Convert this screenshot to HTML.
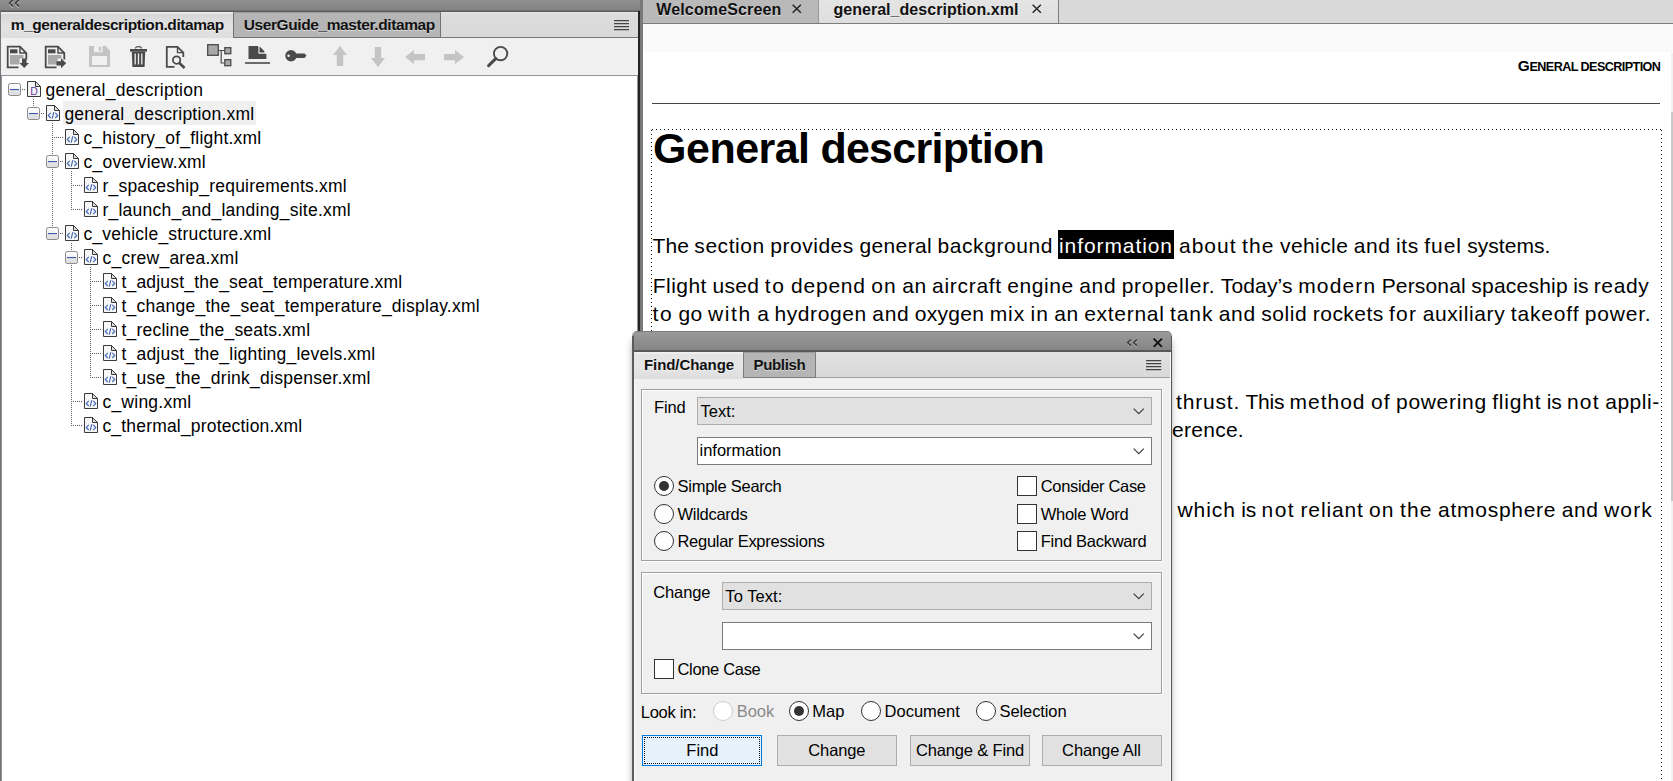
<!DOCTYPE html><html><head><meta charset="utf-8"><title>general_description.xml</title><style>
html,body{margin:0;padding:0}
body{width:1673px;height:781px;overflow:hidden;position:relative;background:#fff;font-family:"Liberation Sans",sans-serif;color:#000}
.a{position:absolute}
.t{position:absolute;white-space:pre;line-height:1;font-family:"Liberation Sans",sans-serif}
svg{position:absolute;overflow:visible}
.gb{position:absolute;border:1px solid #a0a0a0;box-shadow:inset 1px 1px 0 #fff,1px 1px 0 #fff}
.dd{position:absolute;background:#e1e1e1;border:1px solid #adadad;box-sizing:border-box}
.in{position:absolute;background:#fff;border:1px solid #7a7a7a;box-sizing:border-box}
.cb{position:absolute;width:20px;height:20px;background:#fff;border:1px solid #333;box-sizing:border-box}
.rb{position:absolute;width:20px;height:20px;background:#fff;border:1px solid #333;border-radius:50%;box-sizing:border-box}
.rb.on::after{content:"";position:absolute;left:4px;top:4px;width:10px;height:10px;border-radius:50%;background:#333}
.rb.dis{border-color:#ccc}
.btn{position:absolute;background:#e1e1e1;border:1px solid #adadad;box-sizing:border-box}
</style></head><body>
<svg width="0" height="0" style="position:absolute"><defs>
<linearGradient id="gx" x1="0" y1="0" x2="0" y2="1"><stop offset="0" stop-color="#ffffff"/><stop offset="0.5" stop-color="#f2f2f2"/><stop offset="0.5" stop-color="#e4e4e4"/><stop offset="1" stop-color="#dedede"/></linearGradient>
</defs></svg>
<div class="a" id="left" style="left:0;top:0;width:643px;height:781px;background:#dcdcdc">
<div class="a" style="left:0;top:0;width:640px;height:12px;background:linear-gradient(#909090 0,#828282 10px,#5c5c5c 11px,#5c5c5c 12px)"></div>
<svg style="left:9px;top:-1.5px" width="11" height="10" viewBox="0 0 11 10"><path d="M4 2L0.5 5.4L4 8.8M10 2L6.5 5.4L10 8.8" fill="none" stroke="#b4b4b4" stroke-width="1.1"/><path d="M4 0.6L0.5 4L4 7.4M10 0.6L6.5 4L10 7.4" fill="none" stroke="#303030" stroke-width="1.3"/></svg>
<div class="a" style="left:1px;top:12px;width:637px;height:26px;background:linear-gradient(#e4e4e4 0,#dcdcdc 3px,#d8d8d8 100%);border-bottom:1px solid #7a7a7a;box-sizing:border-box"></div>
<div class="a" style="left:1px;top:12px;width:232px;height:27px;background:linear-gradient(#e9e9e9 0,#e9e9e9 1.5px,#d7d7d7 2.5px,#e2e2e2 50%,#dedede 100%)"></div>
<div class="a" style="left:233px;top:12px;width:208px;height:26px;background:#b5b5b5;border:1px solid #727272;border-top:1px solid #9c9c9c;box-sizing:border-box"></div>
<span class="t" style="left:10.63px;top:17px;font-size:15.5px;font-weight:700;letter-spacing:-0.413px;color:#111;text-shadow:0 1px 0 rgba(255,255,255,.5);">m_generaldescription.ditamap</span>
<span class="t" style="left:243.73px;top:17px;font-size:15.5px;font-weight:700;letter-spacing:-0.400px;color:#111;text-shadow:0 1px 0 rgba(255,255,255,.5);">UserGuide_master.ditamap</span>
<svg style="left:614px;top:20px" width="15" height="11" viewBox="0 0 15 11"><path d="M0 0.6H15M0 3.6H15M0 6.6H15M0 9.6H15" stroke="#444" stroke-width="1.25"/></svg>
<div class="a" style="left:1px;top:38px;width:638px;height:37px;background:#f0f0f0"></div>
<svg style="left:7px;top:46px" width="23" height="23" viewBox="0 0 23 23"><path d="M11.5 21.3H0.7V0.7H13L19.3 7V13.5" fill="none" stroke="#4a4a4a" stroke-width="1.8"/><path d="M13 0.7V7H19.3" fill="none" stroke="#4a4a4a" stroke-width="1.5"/><rect x="3" y="3.3" width="7.5" height="4" fill="#4a4a4a"/><path d="M3 9H16.5V12.5H12.5V18.5H3Z" fill="#a8a8a8"/><path d="M15 12.5H19.5V17H22L17.2 22L12.5 17H15Z" fill="#4a4a4a"/></svg>
<svg style="left:45px;top:46px" width="23" height="23" viewBox="0 0 23 23"><path d="M11.5 21.3H0.7V0.7H13L19.3 7V13.5" fill="none" stroke="#4a4a4a" stroke-width="1.8"/><path d="M13 0.7V7H19.3" fill="none" stroke="#4a4a4a" stroke-width="1.5"/><rect x="3" y="3.3" width="7.5" height="4" fill="#4a4a4a"/><path d="M3 9H16.5V12.5H12.5V18.5H3Z" fill="#a8a8a8"/><path d="M11.5 15.3H16V12.3L21.2 17.3L16 22.3V19.5H11.5Z" fill="#4a4a4a"/></svg>
<svg style="left:89px;top:46px" width="21" height="21" viewBox="0 0 21 21"><path d="M0 0H16.5L21 4.5V21H0Z" fill="#c4c4c4"/><rect x="5" y="0" width="8.5" height="6.2" fill="#f0f0f0"/><rect x="9.8" y="0.8" width="2.3" height="4" fill="#c4c4c4"/><rect x="3" y="10" width="15" height="9" fill="#f0f0f0"/></svg>
<svg style="left:130px;top:46px" width="17" height="21" viewBox="0 0 17 21"><path d="M5.5 2.5Q5.5 0.6 8.5 0.6Q11.5 0.6 11.5 2.5" fill="none" stroke="#4a4a4a" stroke-width="1.2"/><rect x="0" y="3" width="17" height="2.6" fill="#4a4a4a"/><path d="M1.8 5.6H15.2L14.6 21H2.4Z" fill="#4a4a4a"/><path d="M5.2 7.5V18.6M8.5 7.5V18.6M11.8 7.5V18.6" stroke="#f0f0f0" stroke-width="1.3"/></svg>
<svg style="left:166px;top:46px" width="20" height="23" viewBox="0 0 20 23"><path d="M8.5 20.8H0.8V0.8H11.5L17.3 6.6V11" fill="none" stroke="#4a4a4a" stroke-width="1.8"/><path d="M11.5 0.8V6.6H17.3" fill="none" stroke="#4a4a4a" stroke-width="1.4"/><circle cx="10.6" cy="14.1" r="3.7" fill="#f0f0f0" stroke="#4a4a4a" stroke-width="1.8"/><path d="M13.3 17L18.6 22" stroke="#4a4a4a" stroke-width="2.6"/></svg>
<svg style="left:207px;top:44px" width="25" height="23" viewBox="0 0 25 23"><path d="M12 6.5H17.5M14.2 6.5V19H17.5" fill="none" stroke="#4a4a4a" stroke-width="1.2"/><rect x="0.7" y="0.7" width="10.6" height="10.6" fill="#a8a8a8" stroke="#4a4a4a" stroke-width="1.3"/><rect x="17.8" y="3.7" width="6" height="6" fill="#a8a8a8" stroke="#4a4a4a" stroke-width="1.3"/><rect x="17.8" y="15.7" width="6" height="6" fill="#a8a8a8" stroke="#4a4a4a" stroke-width="1.3"/></svg>
<svg style="left:245px;top:46px" width="25" height="18" viewBox="0 0 25 18"><path d="M3.5 0H13L21.4 8.4V13H3.5Z" fill="#4a4a4a"/><path d="M14.2 0.2V5.3H19.3Z" fill="#4a4a4a"/><path d="M14 0V7.2H21.4" fill="none" stroke="#f0f0f0" stroke-width="1.2"/><path d="M14.8 0.9L14.8 5.9H19.8Z" fill="#4a4a4a"/><rect x="0" y="16.2" width="25" height="1.6" fill="#4a4a4a"/></svg>
<svg style="left:284.5px;top:50px" width="22" height="12" viewBox="0 0 22 12"><circle cx="6" cy="5.8" r="5.7" fill="#4a4a4a"/><path d="M10 3.4H19.5L21.5 5.6L19.5 8H10Z" fill="#4a4a4a"/><circle cx="3.6" cy="5.8" r="1.3" fill="#f0f0f0"/></svg>
<svg style="left:332.5px;top:45.8px" width="14" height="20" viewBox="0 0 14 20"><path d="M7 0L14 9H10.2V20H3.8V9H0Z" fill="#c4c4c4"/></svg>
<svg style="left:370.6px;top:47.2px" width="14" height="20" viewBox="0 0 14 20"><path d="M3.8 0H10.2V11H14L7 20L0 11H3.8Z" fill="#c4c4c4"/></svg>
<svg style="left:404.8px;top:50px" width="20" height="14" viewBox="0 0 20 14"><path d="M0 7L9 0V4H20V10.2H9V14Z" fill="#c4c4c4"/></svg>
<svg style="left:444.2px;top:50px" width="20" height="14" viewBox="0 0 20 14"><path d="M20 7L11 0V4H0V10.2H11V14Z" fill="#c4c4c4"/></svg>
<svg style="left:487px;top:46px" width="22" height="21" viewBox="0 0 22 21"><circle cx="13.6" cy="7.6" r="6.7" fill="none" stroke="#4a4a4a" stroke-width="1.9"/><path d="M8.8 12.6L1.6 19.6" stroke="#4a4a4a" stroke-width="3" stroke-linecap="round"/></svg>
<div class="a" style="left:1px;top:75px;width:637px;height:720px;background:#fff;border:1px solid #8f949c;box-sizing:border-box"></div>
<div class="a" style="left:63px;top:101px;width:193px;height:24px;background:#f0f0f0"></div>
<div class="a" style="left:22px;top:89px;width:4px;height:1px;background:repeating-linear-gradient(to right,#5c5c5c 0 1px,transparent 1px 2px)"></div>
<div class="a" style="left:33px;top:99px;width:1px;height:15px;background:repeating-linear-gradient(to bottom,#5c5c5c 0 1px,transparent 1px 2px)"></div>
<div class="a" style="left:41px;top:113px;width:4px;height:1px;background:repeating-linear-gradient(to right,#5c5c5c 0 1px,transparent 1px 2px)"></div>
<div class="a" style="left:52px;top:123px;width:1px;height:111px;background:repeating-linear-gradient(to bottom,#5c5c5c 0 1px,transparent 1px 2px)"></div>
<div class="a" style="left:54px;top:137px;width:10px;height:1px;background:repeating-linear-gradient(to right,#5c5c5c 0 1px,transparent 1px 2px)"></div>
<div class="a" style="left:60px;top:161px;width:4px;height:1px;background:repeating-linear-gradient(to right,#5c5c5c 0 1px,transparent 1px 2px)"></div>
<div class="a" style="left:71px;top:171px;width:1px;height:39px;background:repeating-linear-gradient(to bottom,#5c5c5c 0 1px,transparent 1px 2px)"></div>
<div class="a" style="left:73px;top:185px;width:10px;height:1px;background:repeating-linear-gradient(to right,#5c5c5c 0 1px,transparent 1px 2px)"></div>
<div class="a" style="left:73px;top:209px;width:10px;height:1px;background:repeating-linear-gradient(to right,#5c5c5c 0 1px,transparent 1px 2px)"></div>
<div class="a" style="left:60px;top:233px;width:4px;height:1px;background:repeating-linear-gradient(to right,#5c5c5c 0 1px,transparent 1px 2px)"></div>
<div class="a" style="left:71px;top:243px;width:1px;height:183px;background:repeating-linear-gradient(to bottom,#5c5c5c 0 1px,transparent 1px 2px)"></div>
<div class="a" style="left:79px;top:257px;width:4px;height:1px;background:repeating-linear-gradient(to right,#5c5c5c 0 1px,transparent 1px 2px)"></div>
<div class="a" style="left:90px;top:267px;width:1px;height:111px;background:repeating-linear-gradient(to bottom,#5c5c5c 0 1px,transparent 1px 2px)"></div>
<div class="a" style="left:92px;top:281px;width:10px;height:1px;background:repeating-linear-gradient(to right,#5c5c5c 0 1px,transparent 1px 2px)"></div>
<div class="a" style="left:92px;top:305px;width:10px;height:1px;background:repeating-linear-gradient(to right,#5c5c5c 0 1px,transparent 1px 2px)"></div>
<div class="a" style="left:92px;top:329px;width:10px;height:1px;background:repeating-linear-gradient(to right,#5c5c5c 0 1px,transparent 1px 2px)"></div>
<div class="a" style="left:92px;top:353px;width:10px;height:1px;background:repeating-linear-gradient(to right,#5c5c5c 0 1px,transparent 1px 2px)"></div>
<div class="a" style="left:92px;top:377px;width:10px;height:1px;background:repeating-linear-gradient(to right,#5c5c5c 0 1px,transparent 1px 2px)"></div>
<div class="a" style="left:73px;top:401px;width:10px;height:1px;background:repeating-linear-gradient(to right,#5c5c5c 0 1px,transparent 1px 2px)"></div>
<div class="a" style="left:73px;top:425px;width:10px;height:1px;background:repeating-linear-gradient(to right,#5c5c5c 0 1px,transparent 1px 2px)"></div>
<svg style="left:8px;top:83px" width="13" height="13" viewBox="0 0 13 13"><rect x="0.5" y="0.5" width="12" height="12" rx="1.8" fill="url(#gx)" stroke="#8c8c8c"/><rect x="2" y="6" width="9" height="1.1" fill="#3d5cb0"/></svg>
<svg style="left:27px;top:81px" width="14" height="16" viewBox="0 0 14 16"><path d="M0.5 0.5H8.5L13.5 5.5V15.5H0.5Z" fill="#f6f6f6" stroke="#3a3a3a" stroke-width="1"/><path d="M8.5 0.5V5.5H13.5Z" fill="#dcdcdc" stroke="#3a3a3a" stroke-width="1"/><text x="3.3" y="14" font-family="Liberation Sans,sans-serif" font-size="10.5" fill="#6a3aa8">D</text></svg>
<span class="t" style="left:45.42px;top:82px;font-size:17.5px;letter-spacing:0.264px;">general_description</span>
<svg style="left:27px;top:107px" width="13" height="13" viewBox="0 0 13 13"><rect x="0.5" y="0.5" width="12" height="12" rx="1.8" fill="url(#gx)" stroke="#8c8c8c"/><rect x="2" y="6" width="9" height="1.1" fill="#3d5cb0"/></svg>
<svg style="left:46px;top:105px" width="14" height="16" viewBox="0 0 14 16"><path d="M0.5 0.5H8.5L13.5 5.5V15.5H0.5Z" fill="#f6f6f6" stroke="#3a3a3a" stroke-width="1"/><path d="M8.5 0.5V5.5H13.5Z" fill="#dcdcdc" stroke="#3a3a3a" stroke-width="1"/><path d="M4.7 7.8L2.3 10.4L4.7 13M9.3 7.8L11.7 10.4L9.3 13M7.8 7.2L6.2 13.6" fill="none" stroke="#4468b8" stroke-width="1.15"/></svg>
<span class="t" style="left:64.42px;top:106px;font-size:17.5px;letter-spacing:0.228px;">general_description.xml</span>
<svg style="left:65px;top:129px" width="14" height="16" viewBox="0 0 14 16"><path d="M0.5 0.5H8.5L13.5 5.5V15.5H0.5Z" fill="#f6f6f6" stroke="#3a3a3a" stroke-width="1"/><path d="M8.5 0.5V5.5H13.5Z" fill="#dcdcdc" stroke="#3a3a3a" stroke-width="1"/><path d="M4.7 7.8L2.3 10.4L4.7 13M9.3 7.8L11.7 10.4L9.3 13M7.8 7.2L6.2 13.6" fill="none" stroke="#4468b8" stroke-width="1.15"/></svg>
<span class="t" style="left:83.42px;top:130px;font-size:17.5px;letter-spacing:0.210px;">c_history_of_flight.xml</span>
<svg style="left:46px;top:155px" width="13" height="13" viewBox="0 0 13 13"><rect x="0.5" y="0.5" width="12" height="12" rx="1.8" fill="url(#gx)" stroke="#8c8c8c"/><rect x="2" y="6" width="9" height="1.1" fill="#3d5cb0"/></svg>
<svg style="left:65px;top:153px" width="14" height="16" viewBox="0 0 14 16"><path d="M0.5 0.5H8.5L13.5 5.5V15.5H0.5Z" fill="#f6f6f6" stroke="#3a3a3a" stroke-width="1"/><path d="M8.5 0.5V5.5H13.5Z" fill="#dcdcdc" stroke="#3a3a3a" stroke-width="1"/><path d="M4.7 7.8L2.3 10.4L4.7 13M9.3 7.8L11.7 10.4L9.3 13M7.8 7.2L6.2 13.6" fill="none" stroke="#4468b8" stroke-width="1.15"/></svg>
<span class="t" style="left:83.42px;top:154px;font-size:17.5px;letter-spacing:0.279px;">c_overview.xml</span>
<svg style="left:84px;top:177px" width="14" height="16" viewBox="0 0 14 16"><path d="M0.5 0.5H8.5L13.5 5.5V15.5H0.5Z" fill="#f6f6f6" stroke="#3a3a3a" stroke-width="1"/><path d="M8.5 0.5V5.5H13.5Z" fill="#dcdcdc" stroke="#3a3a3a" stroke-width="1"/><path d="M4.7 7.8L2.3 10.4L4.7 13M9.3 7.8L11.7 10.4L9.3 13M7.8 7.2L6.2 13.6" fill="none" stroke="#4468b8" stroke-width="1.15"/></svg>
<span class="t" style="left:102.42px;top:178px;font-size:17.5px;letter-spacing:0.223px;">r_spaceship_requirements.xml</span>
<svg style="left:84px;top:201px" width="14" height="16" viewBox="0 0 14 16"><path d="M0.5 0.5H8.5L13.5 5.5V15.5H0.5Z" fill="#f6f6f6" stroke="#3a3a3a" stroke-width="1"/><path d="M8.5 0.5V5.5H13.5Z" fill="#dcdcdc" stroke="#3a3a3a" stroke-width="1"/><path d="M4.7 7.8L2.3 10.4L4.7 13M9.3 7.8L11.7 10.4L9.3 13M7.8 7.2L6.2 13.6" fill="none" stroke="#4468b8" stroke-width="1.15"/></svg>
<span class="t" style="left:102.42px;top:202px;font-size:17.5px;letter-spacing:0.251px;">r_launch_and_landing_site.xml</span>
<svg style="left:46px;top:227px" width="13" height="13" viewBox="0 0 13 13"><rect x="0.5" y="0.5" width="12" height="12" rx="1.8" fill="url(#gx)" stroke="#8c8c8c"/><rect x="2" y="6" width="9" height="1.1" fill="#3d5cb0"/></svg>
<svg style="left:65px;top:225px" width="14" height="16" viewBox="0 0 14 16"><path d="M0.5 0.5H8.5L13.5 5.5V15.5H0.5Z" fill="#f6f6f6" stroke="#3a3a3a" stroke-width="1"/><path d="M8.5 0.5V5.5H13.5Z" fill="#dcdcdc" stroke="#3a3a3a" stroke-width="1"/><path d="M4.7 7.8L2.3 10.4L4.7 13M9.3 7.8L11.7 10.4L9.3 13M7.8 7.2L6.2 13.6" fill="none" stroke="#4468b8" stroke-width="1.15"/></svg>
<span class="t" style="left:83.42px;top:226px;font-size:17.5px;letter-spacing:0.226px;">c_vehicle_structure.xml</span>
<svg style="left:65px;top:251px" width="13" height="13" viewBox="0 0 13 13"><rect x="0.5" y="0.5" width="12" height="12" rx="1.8" fill="url(#gx)" stroke="#8c8c8c"/><rect x="2" y="6" width="9" height="1.1" fill="#3d5cb0"/></svg>
<svg style="left:84px;top:249px" width="14" height="16" viewBox="0 0 14 16"><path d="M0.5 0.5H8.5L13.5 5.5V15.5H0.5Z" fill="#f6f6f6" stroke="#3a3a3a" stroke-width="1"/><path d="M8.5 0.5V5.5H13.5Z" fill="#dcdcdc" stroke="#3a3a3a" stroke-width="1"/><path d="M4.7 7.8L2.3 10.4L4.7 13M9.3 7.8L11.7 10.4L9.3 13M7.8 7.2L6.2 13.6" fill="none" stroke="#4468b8" stroke-width="1.15"/></svg>
<span class="t" style="left:102.42px;top:250px;font-size:17.5px;letter-spacing:0.259px;">c_crew_area.xml</span>
<svg style="left:103px;top:273px" width="14" height="16" viewBox="0 0 14 16"><path d="M0.5 0.5H8.5L13.5 5.5V15.5H0.5Z" fill="#f6f6f6" stroke="#3a3a3a" stroke-width="1"/><path d="M8.5 0.5V5.5H13.5Z" fill="#dcdcdc" stroke="#3a3a3a" stroke-width="1"/><path d="M4.7 7.8L2.3 10.4L4.7 13M9.3 7.8L11.7 10.4L9.3 13M7.8 7.2L6.2 13.6" fill="none" stroke="#4468b8" stroke-width="1.15"/></svg>
<span class="t" style="left:121.42px;top:274px;font-size:17.5px;letter-spacing:0.201px;">t_adjust_the_seat_temperature.xml</span>
<svg style="left:103px;top:297px" width="14" height="16" viewBox="0 0 14 16"><path d="M0.5 0.5H8.5L13.5 5.5V15.5H0.5Z" fill="#f6f6f6" stroke="#3a3a3a" stroke-width="1"/><path d="M8.5 0.5V5.5H13.5Z" fill="#dcdcdc" stroke="#3a3a3a" stroke-width="1"/><path d="M4.7 7.8L2.3 10.4L4.7 13M9.3 7.8L11.7 10.4L9.3 13M7.8 7.2L6.2 13.6" fill="none" stroke="#4468b8" stroke-width="1.15"/></svg>
<span class="t" style="left:121.42px;top:298px;font-size:17.5px;letter-spacing:0.259px;">t_change_the_seat_temperature_display.xml</span>
<svg style="left:103px;top:321px" width="14" height="16" viewBox="0 0 14 16"><path d="M0.5 0.5H8.5L13.5 5.5V15.5H0.5Z" fill="#f6f6f6" stroke="#3a3a3a" stroke-width="1"/><path d="M8.5 0.5V5.5H13.5Z" fill="#dcdcdc" stroke="#3a3a3a" stroke-width="1"/><path d="M4.7 7.8L2.3 10.4L4.7 13M9.3 7.8L11.7 10.4L9.3 13M7.8 7.2L6.2 13.6" fill="none" stroke="#4468b8" stroke-width="1.15"/></svg>
<span class="t" style="left:121.42px;top:322px;font-size:17.5px;letter-spacing:0.218px;">t_recline_the_seats.xml</span>
<svg style="left:103px;top:345px" width="14" height="16" viewBox="0 0 14 16"><path d="M0.5 0.5H8.5L13.5 5.5V15.5H0.5Z" fill="#f6f6f6" stroke="#3a3a3a" stroke-width="1"/><path d="M8.5 0.5V5.5H13.5Z" fill="#dcdcdc" stroke="#3a3a3a" stroke-width="1"/><path d="M4.7 7.8L2.3 10.4L4.7 13M9.3 7.8L11.7 10.4L9.3 13M7.8 7.2L6.2 13.6" fill="none" stroke="#4468b8" stroke-width="1.15"/></svg>
<span class="t" style="left:121.42px;top:346px;font-size:17.5px;letter-spacing:0.218px;">t_adjust_the_lighting_levels.xml</span>
<svg style="left:103px;top:369px" width="14" height="16" viewBox="0 0 14 16"><path d="M0.5 0.5H8.5L13.5 5.5V15.5H0.5Z" fill="#f6f6f6" stroke="#3a3a3a" stroke-width="1"/><path d="M8.5 0.5V5.5H13.5Z" fill="#dcdcdc" stroke="#3a3a3a" stroke-width="1"/><path d="M4.7 7.8L2.3 10.4L4.7 13M9.3 7.8L11.7 10.4L9.3 13M7.8 7.2L6.2 13.6" fill="none" stroke="#4468b8" stroke-width="1.15"/></svg>
<span class="t" style="left:121.42px;top:370px;font-size:17.5px;letter-spacing:0.276px;">t_use_the_drink_dispenser.xml</span>
<svg style="left:84px;top:393px" width="14" height="16" viewBox="0 0 14 16"><path d="M0.5 0.5H8.5L13.5 5.5V15.5H0.5Z" fill="#f6f6f6" stroke="#3a3a3a" stroke-width="1"/><path d="M8.5 0.5V5.5H13.5Z" fill="#dcdcdc" stroke="#3a3a3a" stroke-width="1"/><path d="M4.7 7.8L2.3 10.4L4.7 13M9.3 7.8L11.7 10.4L9.3 13M7.8 7.2L6.2 13.6" fill="none" stroke="#4468b8" stroke-width="1.15"/></svg>
<span class="t" style="left:102.42px;top:394px;font-size:17.5px;letter-spacing:0.241px;">c_wing.xml</span>
<svg style="left:84px;top:417px" width="14" height="16" viewBox="0 0 14 16"><path d="M0.5 0.5H8.5L13.5 5.5V15.5H0.5Z" fill="#f6f6f6" stroke="#3a3a3a" stroke-width="1"/><path d="M8.5 0.5V5.5H13.5Z" fill="#dcdcdc" stroke="#3a3a3a" stroke-width="1"/><path d="M4.7 7.8L2.3 10.4L4.7 13M9.3 7.8L11.7 10.4L9.3 13M7.8 7.2L6.2 13.6" fill="none" stroke="#4468b8" stroke-width="1.15"/></svg>
<span class="t" style="left:102.42px;top:418px;font-size:17.5px;letter-spacing:0.182px;">c_thermal_protection.xml</span>
<div class="a" style="left:0;top:11px;width:1px;height:770px;background:#747474"></div>
<div class="a" style="left:638px;top:11px;width:2px;height:770px;background:#242424"></div>
<div class="a" style="left:640px;top:0;width:3px;height:781px;background:#787878"></div>
</div>
<div class="a" id="doc" style="left:643px;top:0;width:1030px;height:781px;background:#fff">
</div>
<div class="a" style="left:643px;top:0;width:1030px;height:24px;background:#d9d9d9;border-bottom:1px solid #7c7c7c;box-sizing:border-box"></div>
<div class="a" style="left:643px;top:0;width:176px;height:23px;background:#b9b9b9;border-right:1px solid #999;box-sizing:border-box"></div>
<div class="a" style="left:819px;top:0;width:240px;height:24px;background:linear-gradient(#e4e4e4,#dedede);border-right:1px solid #7c7c7c;border-bottom:1px solid #7c7c7c;box-sizing:border-box"></div>
<span class="t" style="left:656.30px;top:2px;font-size:16px;font-weight:700;letter-spacing:0.136px;color:#111;text-shadow:0 1px 0 rgba(255,255,255,.5);">WelcomeScreen</span>
<span class="t" style="left:833.40px;top:2px;font-size:16px;font-weight:700;letter-spacing:0.041px;color:#111;text-shadow:0 1px 0 rgba(255,255,255,.5);">general_description.xml</span>
<svg style="left:792px;top:4.3px" width="9.5" height="9.5" viewBox="0 0 10 10"><path d="M0.7 0.7L9.3 9.3M9.3 0.7L0.7 9.3" stroke="#222" stroke-width="1.5" fill="none"/></svg>
<svg style="left:1032px;top:4.3px" width="9.5" height="9.5" viewBox="0 0 10 10"><path d="M0.7 0.7L9.3 9.3M9.3 0.7L0.7 9.3" stroke="#222" stroke-width="1.5" fill="none"/></svg>
<div class="a" style="left:643px;top:24px;width:1030px;height:28px;background:#fafafa"></div>
<div class="a" style="left:1671px;top:53px;width:2px;height:728px;background:#f0f0f0"></div>
<div class="a" style="left:1671px;top:112px;width:2px;height:389px;background:#c8c8c8"></div>
<div class="a" style="left:652px;top:103px;width:1008px;height:1px;background:#444"></div>
<span class="t" style="left:1517.63px;top:58px;font-size:15.4px;font-weight:700;">G</span><span class="t" style="left:1529.53px;top:61px;font-size:12.6px;font-weight:700;letter-spacing:-0.572px;">ENERAL DESCRIPTION</span>
<div class="a" style="left:651px;top:129px;width:1011px;height:1px;background:repeating-linear-gradient(to right,transparent 0 1px,#111 1px 2px,transparent 2px 4px)"></div>
<div class="a" style="left:651px;top:129px;width:1px;height:652px;background:repeating-linear-gradient(to bottom,transparent 0 1px,#111 1px 2px,transparent 2px 4px)"></div>
<div class="a" style="left:1661px;top:129px;width:1px;height:652px;background:repeating-linear-gradient(to bottom,transparent 0 1px,#111 1px 2px,transparent 2px 4px)"></div>
<span class="t" style="left:653.10px;top:127px;font-size:43px;font-weight:700;letter-spacing:-0.531px;">General</span> <span class="t" style="left:820.40px;top:127px;font-size:43px;font-weight:700;letter-spacing:-0.741px;">description</span>
<span class="t" style="left:652.50px;top:235px;font-size:21px;letter-spacing:0.068px;">The</span> <span class="t" style="left:694.34px;top:235px;font-size:21px;letter-spacing:0.549px;">section</span> <span class="t" style="left:770.17px;top:235px;font-size:21px;letter-spacing:0.545px;">provides</span> <span class="t" style="left:859.38px;top:235px;font-size:21px;letter-spacing:0.384px;">general</span> <span class="t" style="left:937.58px;top:235px;font-size:21px;letter-spacing:0.562px;">background</span>
<div class="a" style="left:1058px;top:230px;width:116px;height:29px;background:#000"></div>
<span class="t" style="left:1059.00px;top:235px;font-size:21px;letter-spacing:0.913px;color:#fff;">information</span>
<span class="t" style="left:1179.00px;top:235px;font-size:21px;letter-spacing:0.988px;">about</span> <span class="t" style="left:1241.92px;top:235px;font-size:21px;letter-spacing:1.146px;">the</span> <span class="t" style="left:1279.98px;top:235px;font-size:21px;letter-spacing:0.426px;">vehicle</span> <span class="t" style="left:1353.78px;top:235px;font-size:21px;letter-spacing:0.568px;">and</span> <span class="t" style="left:1395.97px;top:235px;font-size:21px;letter-spacing:0.656px;">its</span> <span class="t" style="left:1424.36px;top:235px;font-size:21px;letter-spacing:0.895px;">fuel</span> <span class="t" style="left:1467.23px;top:235px;font-size:21px;letter-spacing:0.039px;">systems.</span>
<span class="t" style="left:652.70px;top:275px;font-size:21px;letter-spacing:0.479px;">Flight</span> <span class="t" style="left:712.40px;top:275px;font-size:21px;letter-spacing:0.348px;">used</span> <span class="t" style="left:764.81px;top:275px;font-size:21px;letter-spacing:1.562px;">to</span> <span class="t" style="left:790.92px;top:275px;font-size:21px;letter-spacing:0.812px;">depend</span> <span class="t" style="left:871.34px;top:275px;font-size:21px;letter-spacing:1.062px;">on</span> <span class="t" style="left:902.29px;top:275px;font-size:21px;letter-spacing:0.477px;">an</span> <span class="t" style="left:932.08px;top:275px;font-size:21px;letter-spacing:0.697px;">aircraft</span> <span class="t" style="left:1007.31px;top:275px;font-size:21px;letter-spacing:0.565px;">engine</span> <span class="t" style="left:1079.25px;top:275px;font-size:21px;letter-spacing:0.656px;">and</span> <span class="t" style="left:1121.73px;top:275px;font-size:21px;letter-spacing:0.717px;">propeller.</span> <span class="t" style="left:1220.76px;top:275px;font-size:21px;letter-spacing:0.165px;">Today’s</span> <span class="t" style="left:1298.22px;top:275px;font-size:21px;letter-spacing:1.133px;">modern</span> <span class="t" style="left:1381.70px;top:275px;font-size:21px;letter-spacing:0.160px;">Personal</span> <span class="t" style="left:1471.34px;top:275px;font-size:21px;letter-spacing:0.217px;">spaceship</span> <span class="t" style="left:1573.33px;top:275px;font-size:21px;letter-spacing:-0.078px;">is</span> <span class="t" style="left:1593.81px;top:275px;font-size:21px;letter-spacing:0.581px;">ready</span>
<span class="t" style="left:652.50px;top:303px;font-size:21px;letter-spacing:1.570px;">to</span> <span class="t" style="left:678.62px;top:303px;font-size:21px;letter-spacing:0.328px;">go</span> <span class="t" style="left:708.11px;top:303px;font-size:21px;letter-spacing:1.586px;">with</span> <span class="t" style="left:757.30px;top:303px;font-size:21px;letter-spacing:-0.094px;">a</span> <span class="t" style="left:774.38px;top:303px;font-size:21px;letter-spacing:0.611px;">hydrogen</span> <span class="t" style="left:872.33px;top:303px;font-size:21px;letter-spacing:0.667px;">and</span> <span class="t" style="left:914.84px;top:303px;font-size:21px;letter-spacing:0.284px;">oxygen</span> <span class="t" style="left:989.73px;top:303px;font-size:21px;letter-spacing:0.906px;">mix</span> <span class="t" style="left:1030.61px;top:303px;font-size:21px;letter-spacing:0.961px;">in</span> <span class="t" style="left:1054.36px;top:303px;font-size:21px;letter-spacing:0.484px;">an</span> <span class="t" style="left:1084.17px;top:303px;font-size:21px;letter-spacing:0.719px;">external</span> <span class="t" style="left:1170.11px;top:303px;font-size:21px;letter-spacing:0.863px;">tank</span> <span class="t" style="left:1218.73px;top:303px;font-size:21px;letter-spacing:0.667px;">and</span> <span class="t" style="left:1261.27px;top:303px;font-size:21px;letter-spacing:0.575px;">solid</span> <span class="t" style="left:1312.83px;top:303px;font-size:21px;letter-spacing:0.444px;">rockets</span> <span class="t" style="left:1389.09px;top:303px;font-size:21px;letter-spacing:1.198px;">for</span> <span class="t" style="left:1422.67px;top:303px;font-size:21px;letter-spacing:0.620px;">auxiliary</span> <span class="t" style="left:1510.77px;top:303px;font-size:21px;letter-spacing:0.846px;">takeoff</span> <span class="t" style="left:1584.83px;top:303px;font-size:21px;letter-spacing:0.799px;">power.</span>
<span class="t" style="left:1176.00px;top:391px;font-size:21px;letter-spacing:0.819px;">thrust.</span> <span class="t" style="left:1245.45px;top:391px;font-size:21px;letter-spacing:-0.238px;">This</span> <span class="t" style="left:1289.55px;top:391px;font-size:21px;letter-spacing:0.992px;">method</span> <span class="t" style="left:1370.91px;top:391px;font-size:21px;letter-spacing:1.117px;">of</span> <span class="t" style="left:1396.02px;top:391px;font-size:21px;letter-spacing:0.691px;">powering</span> <span class="t" style="left:1492.14px;top:391px;font-size:21px;letter-spacing:0.833px;">flight</span> <span class="t" style="left:1546.86px;top:391px;font-size:21px;letter-spacing:-0.227px;">is</span> <span class="t" style="left:1566.94px;top:391px;font-size:21px;letter-spacing:1.240px;">not</span> <span class="t" style="left:1605.22px;top:391px;font-size:21px;letter-spacing:0.508px;">appli-</span>
<span class="t" style="left:1172.00px;top:419px;font-size:21px;letter-spacing:0.277px;">erence.</span>
<span class="t" style="left:1177.50px;top:499px;font-size:21px;letter-spacing:0.912px;">which</span> <span class="t" style="left:1241.22px;top:499px;font-size:21px;letter-spacing:-0.109px;">is</span> <span class="t" style="left:1261.61px;top:499px;font-size:21px;letter-spacing:1.411px;">not</span> <span class="t" style="left:1300.50px;top:499px;font-size:21px;letter-spacing:0.853px;">reliant</span> <span class="t" style="left:1369.11px;top:499px;font-size:21px;letter-spacing:1.008px;">on</span> <span class="t" style="left:1399.92px;top:499px;font-size:21px;letter-spacing:1.172px;">the</span> <span class="t" style="left:1438.09px;top:499px;font-size:21px;letter-spacing:0.723px;">atmosphere</span> <span class="t" style="left:1561.67px;top:499px;font-size:21px;letter-spacing:0.604px;">and</span> <span class="t" style="left:1603.98px;top:499px;font-size:21px;letter-spacing:1.180px;">work</span>
<div class="a" id="dlg" style="left:632px;top:331px;width:540px;height:460px;background:#f0f0f0;border-radius:5px 5px 0 0;box-shadow:0 9px 7px rgba(0,0,0,.30)"></div>
<div class="a" style="left:632px;top:331px;width:540px;height:21px;background:linear-gradient(#6e6e6e 0,#999 1.5px,#868686 18.5px,#585858 19.5px,#585858 21px);border-radius:5px 5px 0 0;box-sizing:border-box"></div>
<div class="a" style="left:632px;top:336px;width:2px;height:445px;background:#5c5c5c"></div>
<div class="a" style="left:1170px;top:352px;width:1px;height:429px;background:#f8f8f8"></div><div class="a" style="left:634px;top:379px;width:1px;height:402px;background:#f8f8f8"></div><div class="a" style="left:1171px;top:336px;width:1px;height:445px;background:#565656"></div>
<svg style="left:1127px;top:339px" width="11" height="9" viewBox="0 0 11 9"><path d="M4 1.7L0.6 4.9L4 8.1M10 1.7L6.6 4.9L10 8.1" fill="none" stroke="#b4b4b4" stroke-width="1"/><path d="M4 0.4L0.6 3.6L4 6.8M10 0.4L6.6 3.6L10 6.8" fill="none" stroke="#303030" stroke-width="1.25"/></svg>
<svg style="left:1153px;top:338.3px" width="9.6" height="9.6" viewBox="0 0 10 10"><path d="M0.7 0.7L9.3 9.3M9.3 0.7L0.7 9.3" stroke="#111" stroke-width="1.9" fill="none"/></svg>
<div class="a" style="left:634px;top:352px;width:536px;height:26px;background:linear-gradient(#e2e2e2,#d9d9d9);border-bottom:1px solid #a0a0a0;box-sizing:border-box"></div>
<div class="a" style="left:634px;top:352px;width:109px;height:27px;background:linear-gradient(#eeeeee 0,#eeeeee 1.5px,#e4e4e4 2.5px,#e6e6e6 50%,#dddddd 100%)"></div>
<div class="a" style="left:743px;top:352px;width:73px;height:26px;background:#b5b5b5;border:1px solid #7c7c7c;border-top:1px solid #9c9c9c;box-sizing:border-box"></div>
<span class="t" style="left:643.96px;top:357px;font-size:15px;font-weight:700;letter-spacing:-0.067px;color:#111;text-shadow:0 1px 0 rgba(255,255,255,.5);">Find/Change</span>
<span class="t" style="left:753.46px;top:357px;font-size:15px;font-weight:700;letter-spacing:-0.326px;color:#111;text-shadow:0 1px 0 rgba(255,255,255,.5);">Publish</span>
<svg style="left:1146.3px;top:360px" width="15" height="11" viewBox="0 0 15 11"><path d="M0 0.7H15.2M0 3.7H15.2M0 6.7H15.2M0 9.7H15.2" stroke="#444" stroke-width="1.25"/></svg>
<div class="gb" style="left:641px;top:389px;width:521px;height:172px;box-sizing:border-box"></div>
<span class="t" style="left:654.07px;top:399px;font-size:16.5px;letter-spacing:-0.163px;">Find</span>
<div class="dd" style="left:697px;top:397px;width:455px;height:28px"></div>
<span class="t" style="left:700.62px;top:403px;font-size:16.5px;">Text:</span>
<svg style="left:1132.5px;top:407.5px" width="11.5" height="6.7" viewBox="0 0 12 7"><path d="M0.7 0.7L6 6L11.3 0.7" fill="none" stroke="#404040" stroke-width="1.3"/></svg>
<div class="in" style="left:697px;top:437px;width:455px;height:28px"></div>
<span class="t" style="left:699.49px;top:442px;font-size:16.5px;">information</span>
<svg style="left:1132.5px;top:447.5px" width="11.5" height="6.7" viewBox="0 0 12 7"><path d="M0.7 0.7L6 6L11.3 0.7" fill="none" stroke="#404040" stroke-width="1.3"/></svg>
<div class="rb on" style="left:654px;top:476px"></div>
<span class="t" style="left:677.47px;top:478px;font-size:16.5px;letter-spacing:-0.250px;">Simple Search</span>
<div class="rb" style="left:654px;top:504px"></div>
<span class="t" style="left:677.47px;top:506px;font-size:16.5px;letter-spacing:-0.276px;">Wildcards</span>
<div class="rb" style="left:654px;top:531px"></div>
<span class="t" style="left:677.47px;top:533px;font-size:16.5px;letter-spacing:-0.273px;">Regular Expressions</span>
<div class="cb" style="left:1017px;top:476px"></div>
<span class="t" style="left:1040.77px;top:478px;font-size:16.5px;letter-spacing:-0.322px;">Consider Case</span>
<div class="cb" style="left:1017px;top:504px"></div>
<span class="t" style="left:1040.77px;top:506px;font-size:16.5px;letter-spacing:-0.283px;">Whole Word</span>
<div class="cb" style="left:1017px;top:531px"></div>
<span class="t" style="left:1040.77px;top:533px;font-size:16.5px;letter-spacing:-0.268px;">Find Backward</span>
<div class="gb" style="left:641px;top:572px;width:521px;height:122px;box-sizing:border-box"></div>
<span class="t" style="left:653.27px;top:584px;font-size:16.5px;letter-spacing:-0.126px;">Change</span>
<div class="dd" style="left:722px;top:582px;width:430px;height:28px"></div>
<span class="t" style="left:725.37px;top:588px;font-size:16.5px;letter-spacing:0.062px;">To Text:</span>
<svg style="left:1132.5px;top:592.5px" width="11.5" height="6.7" viewBox="0 0 12 7"><path d="M0.7 0.7L6 6L11.3 0.7" fill="none" stroke="#404040" stroke-width="1.3"/></svg>
<div class="in" style="left:722px;top:622px;width:430px;height:28px"></div>
<svg style="left:1132.5px;top:632.5px" width="11.5" height="6.7" viewBox="0 0 12 7"><path d="M0.7 0.7L6 6L11.3 0.7" fill="none" stroke="#404040" stroke-width="1.3"/></svg>
<div class="cb" style="left:654px;top:659px"></div>
<span class="t" style="left:677.47px;top:661px;font-size:16.5px;letter-spacing:-0.326px;">Clone Case</span>
<span class="t" style="left:640.77px;top:704px;font-size:16.5px;letter-spacing:-0.280px;">Look in:</span>
<div class="rb dis" style="left:713px;top:701px"></div>
<span class="t" style="left:736.67px;top:703px;font-size:16.5px;letter-spacing:0.012px;color:#8a8a8a;">Book</span>
<div class="rb on" style="left:789px;top:701px"></div>
<span class="t" style="left:812.37px;top:703px;font-size:16.5px;letter-spacing:-0.051px;">Map</span>
<div class="rb" style="left:861px;top:701px"></div>
<span class="t" style="left:884.57px;top:703px;font-size:16.5px;letter-spacing:0.007px;">Document</span>
<div class="rb" style="left:976px;top:701px"></div>
<span class="t" style="left:999.57px;top:703px;font-size:16.5px;letter-spacing:-0.104px;">Selection</span>
<div class="btn" style="left:642px;top:735px;width:120px;height:31px;background:#e5f1fb;border:1px solid #0078d7"></div>
<div class="a" style="left:644px;top:737px;width:116px;height:27px;border:1px dotted #111;box-sizing:border-box"></div>
<div class="btn" style="left:777px;top:735px;width:120px;height:31px"></div>
<div class="btn" style="left:910px;top:735px;width:120px;height:31px"></div>
<div class="btn" style="left:1042px;top:735px;width:120px;height:31px"></div>
<span class="t" style="left:686.37px;top:742px;font-size:16.5px;letter-spacing:-0.013px;">Find</span>
<span class="t" style="left:808.27px;top:742px;font-size:16.5px;letter-spacing:-0.109px;">Change</span>
<span class="t" style="left:916.07px;top:742px;font-size:16.5px;letter-spacing:-0.171px;">Change &amp; Find</span>
<span class="t" style="left:1062.07px;top:742px;font-size:16.5px;letter-spacing:-0.096px;">Change All</span>
</body></html>
